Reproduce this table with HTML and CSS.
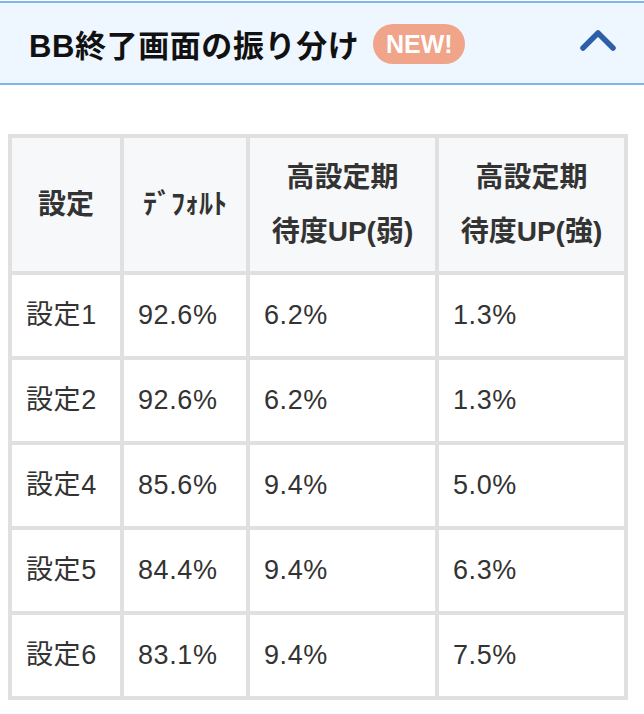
FILE: index.html
```html
<!DOCTYPE html>
<html lang="ja">
<head>
<meta charset="utf-8">
<link rel="stylesheet" href="styles.css">
</head>
<body>
<div class="acc-head">
  <div class="title-wrap">
    <span class="title">BB終了画面の振り分け</span>
    <span class="badge">NEW!</span>
  </div>
  <svg class="chev" width="40" height="28" viewBox="0 0 40 28">
    <polyline points="5,21 20,6 35,21" fill="none" stroke="#2d5fa9" stroke-width="5.5" stroke-linecap="round" stroke-linejoin="round"/>
  </svg>
</div>
<div class="content">
  <table class="rate">
    <thead>
      <tr>
        <th class="c1">設定</th>
        <th class="c2">ﾃﾞﾌｫﾙﾄ</th>
        <th class="c3">高設定期<br>待度UP(弱)</th>
        <th class="c4">高設定期<br>待度UP(強)</th>
      </tr>
    </thead>
    <tbody>
      <tr><td>設定1</td><td>92.6%</td><td>6.2%</td><td>1.3%</td></tr>
      <tr><td>設定2</td><td>92.6%</td><td>6.2%</td><td>1.3%</td></tr>
      <tr><td>設定4</td><td>85.6%</td><td>9.4%</td><td>5.0%</td></tr>
      <tr><td>設定5</td><td>84.4%</td><td>9.4%</td><td>6.3%</td></tr>
      <tr><td>設定6</td><td>83.1%</td><td>9.4%</td><td>7.5%</td></tr>
    </tbody>
  </table>
</div>
</body>
</html>
```
FILE: styles.css
```css
html, body {
  margin: 0;
  padding: 0;
  background: #ffffff;
}
body {
  font-family: "Liberation Sans", "Noto Sans CJK JP", sans-serif;
  color: #333333;
}
.acc-head {
  margin-top: 1px;
  height: 80px;
  background: #eef6ff;
  border-top: 2px solid #80b5f1;
  border-bottom: 2px solid #80b5f1;
  display: flex;
  align-items: center;
  justify-content: space-between;
  padding: 0 26px 0 29px;
}
.title-wrap {
  display: flex;
  align-items: center;
  gap: 14px;
}
.title {
  font-size: 31px;
  font-weight: bold;
  color: #111111;
  letter-spacing: 0.6px;
}
.badge {
  display: inline-flex;
  align-items: center;
  justify-content: center;
  width: 92px;
  height: 40px;
  border-radius: 20px;
  background: #f0a489;
  color: #ffffff;
  font-size: 25px;
  font-weight: bold;
  margin-top: 2px;
}
.chev {
  display: block;
  margin-top: -4px;
}
.content {
  padding: 49px 16px 0 8px;
}
.rate {
  width: 620px;
  border-collapse: separate;
  border-spacing: 4px;
  background: #e0e0e0;
  table-layout: fixed;
}
.rate th {
  background: #f7f8fa;
  font-weight: bold;
  font-size: 28px;
  line-height: 54px;
  height: 133px;
  padding: 0;
  text-align: center;
  color: #333333;
}
.rate th.c1 { width: 108px; }
.rate th.c2 { width: 122px; }
.rate th.c3 { width: 185px; }
.rate th.c4 { width: 185px; }
.rate td {
  background: #ffffff;
  font-size: 27px;
  letter-spacing: 0.6px;
  line-height: 54px;
  height: 79px;
  padding: 0 0 2px 14px;
  text-align: left;
  color: #333333;
}
```
